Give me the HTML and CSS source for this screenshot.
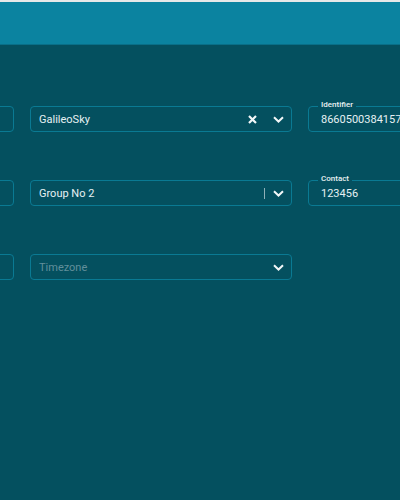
FILE: index.html
```
<!DOCTYPE html>
<html lang="en">
<head>
  <meta charset="UTF-8">
  <meta name="viewport" content="width=device-width, initial-scale=1.0">
  <title>Device Settings</title>
  <link rel="stylesheet" href="styles.css">
</head>
<body>
  <div class="top-strip"></div>
  <div class="app-header"></div>

  <div class="form-area">
    <div class="form-grid">
      <!-- row 1 -->
      <div class="field"></div>
      <div class="field select">
        <span class="value">GalileoSky</span>
        <span class="icons">
          <svg class="icon-clear" width="9" height="9" viewBox="0 0 9 9">
            <path d="M1 1 L8 8 M8 1 L1 8" stroke="#f2f7f8" stroke-width="2.2" fill="none"/>
          </svg>
          <svg class="icon-chevron" width="11" height="7" viewBox="0 0 11 7">
            <path d="M1 1.2 L5.5 5.5 L10 1.2" stroke="#f2f7f8" stroke-width="2" fill="none"/>
          </svg>
        </span>
      </div>
      <div class="field text">
        <label class="field-label">Identifier</label>
        <span class="value">8660500384157</span>
      </div>

      <!-- row 2 -->
      <div class="field"></div>
      <div class="field select">
        <span class="value">Group No 2</span>
        <span class="icons">
          <span class="separator"></span>
          <svg class="icon-chevron" width="11" height="7" viewBox="0 0 11 7">
            <path d="M1 1.2 L5.5 5.5 L10 1.2" stroke="#f2f7f8" stroke-width="2" fill="none"/>
          </svg>
        </span>
      </div>
      <div class="field text">
        <label class="field-label">Contact</label>
        <span class="value">123456</span>
      </div>

      <!-- row 3 -->
      <div class="field"></div>
      <div class="field select">
        <span class="value placeholder">Timezone</span>
        <span class="icons">
          <svg class="icon-chevron" width="11" height="7" viewBox="0 0 11 7">
            <path d="M1 1.2 L5.5 5.5 L10 1.2" stroke="#f2f7f8" stroke-width="2" fill="none"/>
          </svg>
        </span>
      </div>
      <div></div>
    </div>
  </div>
</body>
</html>
```

FILE: styles.css
```
html, body {
  margin: 0;
  padding: 0;
  height: 100%;
}

body {
  font-family: Roboto, "Noto Sans", Arial, sans-serif;
  background-color: #04505f;
  overflow: hidden;
}

.top-strip {
  height: 2px;
  background-color: #e6e8e8;
}

.app-header {
  height: 42px;
  background-color: #0b83a0;
  border-bottom: 1px solid #096f88;
}

.form-area {
  padding-top: 61px;
}

.form-grid {
  display: grid;
  grid-template-columns: 262px 262px 262px;
  grid-auto-rows: 26px;
  column-gap: 16px;
  row-gap: 48px;
  margin-left: -248px;
}

.field {
  position: relative;
  display: flex;
  align-items: center;
  box-sizing: border-box;
  height: 26px;
  border: 1px solid #0a7a93;
  border-radius: 4px;
}

.field.select {
  padding: 0 7px 0 8px;
}

.field.text {
  padding: 0 12px;
}

.value {
  flex: 1;
  font-size: 11px;
  color: #e6f0f3;
  white-space: nowrap;
  overflow: hidden;
}

.value.placeholder {
  color: #618f9b;
}

.icons {
  display: flex;
  align-items: center;
}

.icon-clear {
  margin-right: 16px;
}

.separator {
  width: 1px;
  height: 11px;
  background-color: #8fb0b8;
  margin-right: 8px;
}

.field-label {
  position: absolute;
  top: -7px;
  left: 9px;
  padding: 0 3px;
  background-color: #04505f;
  font-size: 8px;
  font-weight: 500;
  line-height: 10px;
  color: #e8f0f2;
}
```
